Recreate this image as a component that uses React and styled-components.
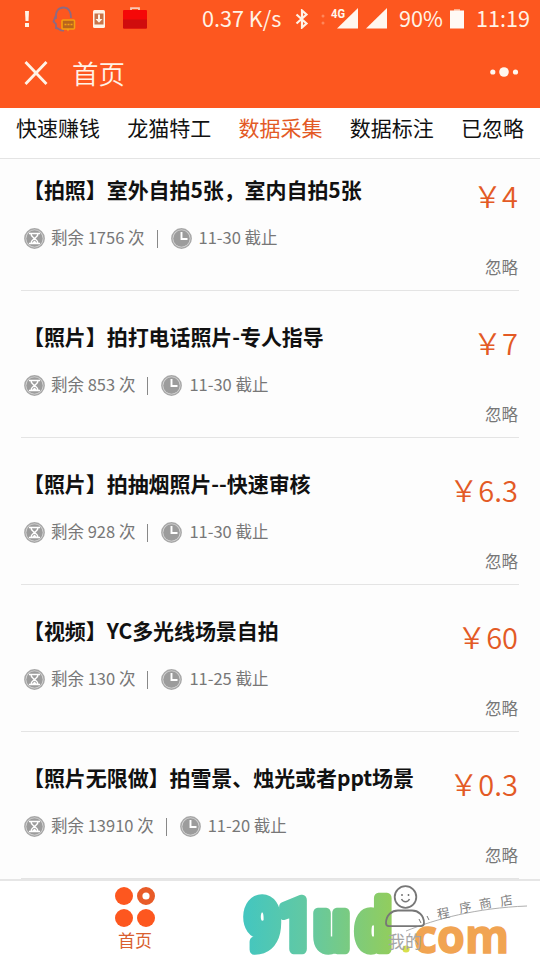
import React from 'react';
import styled, {createGlobalStyle} from 'styled-components';

const colors = {
    orange: '#fd571f',
    accent: '#e35a25',
    black: '#111111',
    gray: '#777777',
    lineColor: '#e4e4e4',
};

const GlobalStyle = createGlobalStyle`
    * {
        box-sizing: border-box;
    }
    body {
        margin: 0;
        background: #ffffff;
        font-family: "Noto Sans CJK SC", "Noto Sans", sans-serif;
    }
`;

const Container = styled.div`
    position: relative;
    width: 540px;
    height: 960px;
    display: flex;
    flex-direction: column;
    overflow: hidden;
    background: #fdfdfd;
`;

const Header = styled.header`
    height: 108px;
    flex: none;
    background: ${colors.orange};
    color: #fff3e6;
`;

const StatusBar = styled.div`
    height: 37px;
    display: flex;
    align-items: center;
`;

const StatusItem = styled.span`
    display: flex;
    flex: none;
    width: ${(props) => props.$width}px;
    margin-left: ${(props) => props.$gap}px;
    font-size: 21.6px;
    line-height: 34px;
    padding-bottom: ${(props) => props.$text ? 2 : 0}px;
    white-space: nowrap;
    svg {
        display: block;
        flex: none;
    }
`;

const TitleBar = styled.div`
    height: 71px;
    padding: 0 20px 0 24px;
    display: flex;
    align-items: center;
`;

const PageTitle = styled.h1`
    margin: 0 0 0 24px;
    flex: 1;
    font-size: 26.5px;
    font-weight: 350;
    line-height: 40px;
`;

const Tabs = styled.nav`
    height: 51px;
    flex: none;
    display: flex;
    justify-content: space-between;
    padding: 0 16px;
    background: #ffffff;
    border-bottom: 1px solid ${colors.lineColor};
`;

const Tab = styled.span`
    font-size: 21px;
    line-height: 39px;
    color: ${(props) => props.$active ? colors.accent : colors.black};
`;

const TaskList = styled.main`
    flex: 1;
    min-height: 0;
    margin-top: -15px;
    padding: 0 21px;
    overflow: hidden;
`;

const Task = styled.section`
    height: 147px;
    display: flex;
    justify-content: space-between;
    border-bottom: 1px solid ${colors.lineColor};
`;

const TaskInfo = styled.div`
    padding: 30px 0 0 2px;
`;

const TaskTitle = styled.h2`
    margin: 0;
    font-size: 21px;
    font-weight: 700;
    line-height: 30px;
    letter-spacing: -0.07px;
    color: ${colors.black};
    white-space: nowrap;
`;

const Meta = styled.div`
    height: 26px;
    margin: 20px 0 0 1px;
    display: flex;
    align-items: center;
    font-size: 16.5px;
    line-height: 26px;
    color: ${colors.gray};
    white-space: nowrap;
    svg {
        display: block;
        margin: 2px 6px 0 0;
    }
`;

const Divider = styled.i`
    width: 1px;
    height: 18px;
    margin: 3px 13px 0 12px;
    background: #888888;
`;

const TaskSide = styled.div`
    display: flex;
    flex-direction: column;
    align-items: flex-end;
    padding-top: 31px;
    padding-right: 1px;
`;

const Price = styled.span`
    font-size: 29px;
    line-height: 40px;
    font-weight: 350;
    color: ${colors.accent};
    white-space: nowrap;
`;

const Ignore = styled.span`
    margin-top: 39px;
    font-size: 16.5px;
    line-height: 26px;
    color: ${colors.gray};
`;

const Footer = styled.footer`
    height: 81px;
    flex: none;
    display: flex;
    background: #ffffff;
    border-top: 2px solid #e6e6e6;
`;

const FooterTab = styled.div`
    position: relative;
    z-index: 1;
    flex: 1;
    padding-top: ${(props) => props.$active ? 6 : 4}px;
    display: flex;
    flex-direction: column;
    align-items: center;
    font-size: 17px;
    line-height: 24px;
    color: ${(props) => props.$active ? '#d9602f' : '#a5a5a5'};
    svg {
        margin-bottom: ${(props) => props.$active ? 0 : 2}px;
    }
`;

const Watermark = styled.svg`
    position: absolute;
    left: 238px;
    bottom: 0;
`;

const tabs = ['快速赚钱', '龙猫特工', '数据采集', '数据标注', '已忽略'];

const tasks = [
    {title: '【拍照】室外自拍5张，室内自拍5张', price: '4', left: 1756, date: '11-30'},
    {title: '【照片】拍打电话照片-专人指导', price: '7', left: 853, date: '11-30'},
    {title: '【照片】拍抽烟照片--快速审核', price: '6.3', left: 928, date: '11-30'},
    {title: '【视频】YC多光线场景自拍', price: '60', left: 130, date: '11-25'},
    {title: '【照片无限做】拍雪景、烛光或者ppt场景', price: '0.3', left: 13910, date: '11-20'},
];

const AlertIcon = () => (
    <svg width="6" height="16" fill="#fff3e6">
        <path d="M1 0h4l-.5 10h-3z"/>
        <rect x="1" y="12" width="4" height="4"/>
    </svg>
);

const HeadsetIcon = () => (
    <svg width="24" height="26" fill="none">
        <path d="M4 13C3 6 6 1.500 11.500 1.500c5 0 7.500 4 7.500 10.500M4 9L1.500 15.500 4 18v4c3 0 3.500 3 8 2.500" stroke="#8d6a83" strokeWidth="1.800"/>
        <rect x="10" y="14" width="12.500" height="9" rx="1" fill="#b8641d" stroke="#f5a011" strokeWidth="1.600"/>
        <path d="M14.500 23l1.500 2.500 1.500-2.500" fill="#f5a011"/>
        <path d="M12.500 18.500h8" stroke="#f5a011" strokeWidth="1.600" strokeDasharray="2 1"/>
    </svg>
);

const DownloadIcon = () => (
    <svg width="12" height="18">
        <rect width="12" height="18" rx="1.500" fill="#fff3e6"/>
        <rect x="1.500" y="3.500" width="9" height="11" fill="#c87448"/>
        <path d="M5 4.500h2V9h2.500L6 12.800 2.500 9H5z" fill="#fff3e6"/>
    </svg>
);

const BriefcaseIcon = () => (
    <svg width="24" height="24">
        <path d="M8 4V1.200h8V4" fill="none" stroke="#f9c9b6" strokeWidth="1.800"/>
        <rect y="3" width="24" height="18.500" rx="1" fill="#f50808"/>
        <path d="M0 12.500h24v8a1 1 0 0 1-1 1H1a1 1 0 0 1-1-1z" fill="#d00d0d"/>
    </svg>
);

const BluetoothIcon = () => (
    <svg width="14" height="20" fill="none" stroke="#fff3e6" strokeWidth="2.200">
        <path d="M1.500 5.500l10 9-4.500 4V1.500l4.500 4-10 9"/>
    </svg>
);

const MobileSignalIcon = () => (
    <svg width="37" height="24">
        <circle cx="2" cy="9" r="1.500" fill="#ff8659"/>
        <circle cx="2" cy="16" r="1.500" fill="#ff8659"/>
        <path d="M37 1v20.500H16z" fill="#fff7ef"/>
        <text x="10" y="11" fontFamily="Roboto, sans-serif" fontSize="12.500" fontWeight="700" fill="#fff7ef" stroke={colors.orange} strokeWidth="2" paintOrder="stroke" textLength="14" lengthAdjust="spacingAndGlyphs">4G</text>
    </svg>
);

const SignalIcon = () => (
    <svg width="21" height="24" fill="#fff7ef"><path d="M21 1v20.500H0z"/></svg>
);

const BatteryIcon = () => (
    <svg width="14" height="22" fill="#fffaf5">
        <path d="M4 1h6v1.500h4v18H0v-18h4z"/>
        <rect x="4" y="1" width="6" height="1.500" fill="#ffab89"/>
    </svg>
);

const CloseIcon = () => (
    <svg width="24" height="24" stroke="#fff3e6" strokeWidth="2.800">
        <path d="M1.500 1l21 22M22.500 1l-21 22"/>
    </svg>
);

const MoreIcon = () => (
    <svg width="30" height="12" fill="#fff7ef">
        <circle cx="2.800" cy="5" r="2.600"/>
        <circle cx="14" cy="5" r="4.800"/>
        <circle cx="25.500" cy="5" r="2.600"/>
    </svg>
);

const HourglassIcon = () => (
    <svg width="21" height="21" fill="none">
        <circle cx="10.500" cy="10.500" r="9.700" fill="#d8d8d8" stroke="#a8a8a8" strokeWidth="1.400"/>
        <circle cx="10.500" cy="10.500" r="8.200" fill="#9c9c9c"/>
        <path d="M5 5.500h11M5 15.500h11M7 5.500c0 3 2 3.500 3.500 5 1.500-1.500 3.500-2 3.500-5M7 15.500c0-3 2-3.500 3.500-5 1.500 1.500 3.500 2 3.500 5" stroke="#ffffff" strokeWidth="1.500"/>
        <path d="M8 15l2.500-2.500L13 15z" fill="#ffffff"/>
    </svg>
);

const ClockIcon = () => (
    <svg width="22" height="21" fill="none">
        <circle cx="10.500" cy="10.500" r="9.700" fill="#d8d8d8" stroke="#a8a8a8" strokeWidth="1.400"/>
        <circle cx="10.500" cy="10.500" r="8.200" fill="#9c9c9c"/>
        <path d="M10.500 4v7h6" stroke="#ffffff" strokeWidth="1.900"/>
    </svg>
);

const HomeIcon = () => (
    <svg width="40" height="41" fill={colors.orange}>
        <circle cx="9" cy="9" r="9"/>
        <circle cx="31" cy="9" r="6.300" fill="#ffffff" stroke="#e85b28" strokeWidth="5.400"/>
        <circle cx="9" cy="31" r="9"/>
        <circle cx="31" cy="31" r="9"/>
    </svg>
);

const MineIcon = () => (
    <svg width="40" height="42" fill="none" stroke="#777777" strokeWidth="1.800">
        <circle cx="20.500" cy="12" r="10.800"/>
        <path d="M16.500 14c1.500 3.500 6.500 3.500 8 0M17 9v2M23.500 9v2" strokeWidth="1.500"/>
        <path d="M4 41.100C1.500 41.100 1 39.500 1 38c0-8 6-12.500 12-12.500h14c6 0 12 4.500 12 12.500 0 1.500-.5 3.100-3 3.100z"/>
    </svg>
);

const SiteMark = () => (
    <Watermark width="302" height="80" viewBox="238 880 302 80">
        <defs>
            <linearGradient id="logo" gradientUnits="userSpaceOnUse" x1="0" y1="0" x2="175" y2="0">
                <stop offset="0" stopColor="#43c6c0"/>
                <stop offset="0.450" stopColor="#65c9a0"/>
                <stop offset="1" stopColor="#94cd5a"/>
            </linearGradient>
        </defs>
        <text
            transform="translate(243 949) scale(0.87 1)"
            x="2.500 41 82.500 130.500"
            y="0"
            fontFamily="Roboto, sans-serif"
            fontSize="69"
            fontWeight="700"
            fill="url(#logo)"
            stroke="url(#logo)"
            strokeWidth="10.500"
            strokeLinejoin="round"
        >
            91ud
        </text>
        <circle cx="406" cy="949" r="3.600" fill="#d8e04c"/>
        <text x="414" y="953" fontFamily="Open Sans, sans-serif" fontSize="47" fontWeight="700" fill="#f1a452" stroke="#f1a452" strokeWidth="1.500" textLength="95" lengthAdjust="spacingAndGlyphs">com</text>
        <path d="M406 931c30-12 70-23 121-25" fill="none" stroke="#999999" strokeWidth="0.800"/>
        <path d="M419 919l2 4M427 916l2 4" stroke="#777777"/>
        <text x="438 460 480 501" y="919 913 909 906" rotate="-10" fontSize="12.500" fill="#808080">程序商店</text>
    </Watermark>
);

const App = () => {
    return (
        <Container>
            <GlobalStyle/>
            <Header>
                <StatusBar>
                    <StatusItem $gap={24} $width={6}><AlertIcon/></StatusItem>
                    <StatusItem $gap={22} $width={24}><HeadsetIcon/></StatusItem>
                    <StatusItem $gap={17} $width={12}><DownloadIcon/></StatusItem>
                    <StatusItem $gap={18} $width={24}><BriefcaseIcon/></StatusItem>
                    <StatusItem $text $gap={55} $width={82}>0.37 K/s</StatusItem>
                    <StatusItem $gap={11} $width={14}><BluetoothIcon/></StatusItem>
                    <StatusItem $gap={12} $width={37}><MobileSignalIcon/></StatusItem>
                    <StatusItem $gap={8} $width={21}><SignalIcon/></StatusItem>
                    <StatusItem $text $gap={12} $width={45}>90%</StatusItem>
                    <StatusItem $gap={6} $width={14}><BatteryIcon/></StatusItem>
                    <StatusItem $text $gap={12} $width={56}>11:19</StatusItem>
                </StatusBar>
                <TitleBar>
                    <CloseIcon/>
                    <PageTitle>首页</PageTitle>
                    <MoreIcon/>
                </TitleBar>
            </Header>
            <Tabs>
                {tabs.map((item) => <Tab key={item} $active={item === '数据采集'}>{item}</Tab>)}
            </Tabs>
            <TaskList>
                {tasks.map((task) => (
                    <Task key={task.title}>
                        <TaskInfo>
                            <TaskTitle>{task.title}</TaskTitle>
                            <Meta>
                                <HourglassIcon/>
                                剩余 {task.left} 次
                                <Divider/>
                                <ClockIcon/>
                                {task.date} 截止
                            </Meta>
                        </TaskInfo>
                        <TaskSide>
                            <Price>￥{task.price}</Price>
                            <Ignore>忽略</Ignore>
                        </TaskSide>
                    </Task>
                ))}
            </TaskList>
            <Footer>
                <FooterTab $active><HomeIcon/>首页</FooterTab>
                <FooterTab><MineIcon/>我的</FooterTab>
            </Footer>
            <SiteMark/>
        </Container>
    )
}

export default App;
